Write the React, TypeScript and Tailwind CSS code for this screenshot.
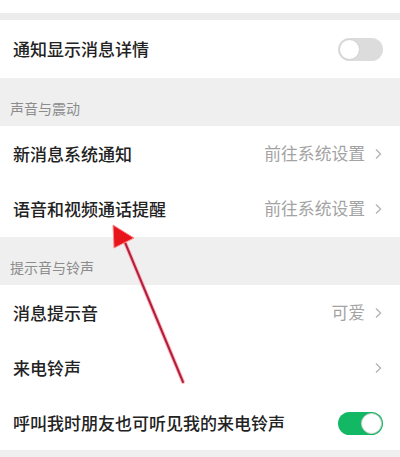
import React from "react";

const font = { fontFamily: '"Noto Sans CJK SC", "Noto Sans", sans-serif' };

const Chevron = () => (
  <svg width="9" height="14" viewBox="0 0 9 14" className="ml-[9px]">
    <path d="M2 2.5l4.5 4.5-4.5 4.5" fill="none" stroke="#b5b5b5" strokeWidth="1.4" />
  </svg>
);

const Toggle = ({ on }: { on?: boolean }) => (
  <div
    className={`w-[45px] h-[23px] rounded-full flex items-center px-[1px] ${
      on ? "bg-[#12b864] justify-end" : "bg-[#dcdcdc] justify-start"
    }`}
  >
    <div className="w-[21px] h-[21px] rounded-full bg-white border border-[#d0d0d0]" />
  </div>
);

interface RowProps {
  label: string;
  value?: string;
  arrow?: boolean;
  toggle?: "on" | "off";
  h?: string;
}

const Row: React.FC<RowProps> = ({ label, value, arrow, toggle, h = "h-[56px]" }) => (
  <div className={`${h} bg-white flex items-center justify-between pl-[13px] pr-[17px]`}>
    <span className="text-[17px] font-medium text-[#222222]">{label}</span>
    <div className="flex items-center">
      {value && <span className="text-[16.8px] text-[#a3a3a3]">{value}</span>}
      {arrow && <Chevron />}
      {toggle && <Toggle on={toggle === "on"} />}
    </div>
  </div>
);

const Header = ({ title }: { title: string }) => (
  <div className="h-[48px] bg-[#efefef] flex items-end pl-[10px] pb-[9px]">
    <span className="text-[14px] text-[#8c8c8c] leading-[18px]">{title}</span>
  </div>
);

export default function App() {
  return (
    <div className="relative w-[400px] h-[457px] bg-[#efefef] overflow-hidden" style={font}>
      <div className="h-[13px] bg-white" />
      <div className="h-[7px] bg-[#ececec]" />
      <Row label="通知显示消息详情" toggle="off" h="h-[58px]" />
      <Header title="声音与震动" />
      <Row label="新消息系统通知" value="前往系统设置" arrow h="h-[55px]" />
      <Row label="语音和视频通话提醒" value="前往系统设置" arrow />
      <Header title="提示音与铃声" />
      <Row label="消息提示音" value="可爱" arrow h="h-[55px]" />
      <Row label="来电铃声" arrow />
      <Row label="呼叫我时朋友也可听见我的来电铃声" toggle="on" h="h-[54px]" />

      {/* red annotation arrow */}
      <svg className="absolute left-0 top-0 pointer-events-none" width="400" height="457">
        <line x1="183" y1="382" x2="124" y2="240" stroke="#ffb3c0" strokeWidth="4" strokeLinecap="round" />
        <line x1="183" y1="382" x2="124" y2="240" stroke="#b0203a" strokeWidth="2" strokeLinecap="round" />
        <polygon points="113,225 134,238 114,248" fill="#e8141c" stroke="#ff8a8a" strokeWidth="1" strokeLinejoin="round" />
      </svg>
    </div>
  );
}
